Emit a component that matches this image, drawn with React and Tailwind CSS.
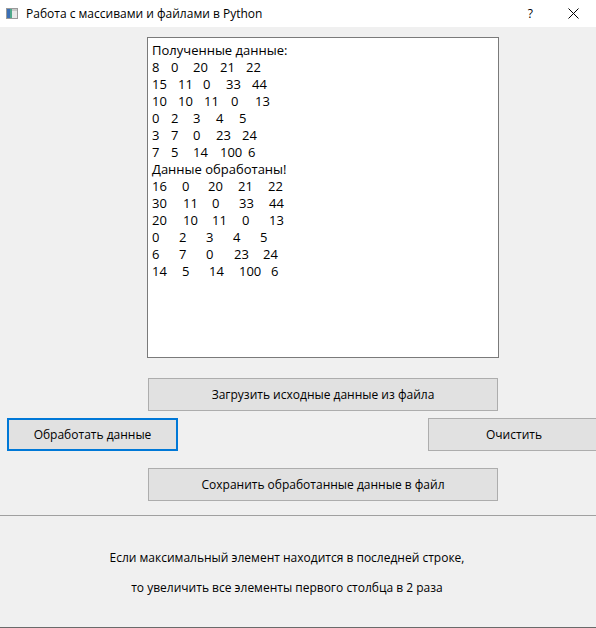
import React from "react";

const original = [
  [["8", "w-[19px]"], ["0", "w-[22px]"], ["20", "w-[27px]"], ["21", "w-[26px]"], ["22", ""]],
  [["15", "w-[26px]"], ["11", "w-[25px]"], ["0", "w-[23px]"], ["33", "w-[26px]"], ["44", ""]],
  [["10", "w-[26px]"], ["10", "w-[26px]"], ["11", "w-[27px]"], ["0", "w-[24px]"], ["13", ""]],
  [["0", "w-[19px]"], ["2", "w-[22px]"], ["3", "w-[23px]"], ["4", "w-[23px]"], ["5", ""]],
  [["3", "w-[19px]"], ["7", "w-[22px]"], ["0", "w-[23px]"], ["23", "w-[26px]"], ["24", ""]],
  [["7", "w-[19px]"], ["5", "w-[22px]"], ["14", "w-[27px]"], ["100", "w-[28px]"], ["6", ""]],
];

const processed = [
  [["16", "w-[30px]"], ["0", "w-[26px]"], ["20", "w-[30px]"], ["21", "w-[30px]"], ["22", ""]],
  [["30", "w-[31px]"], ["11", "w-[29px]"], ["0", "w-[27px]"], ["33", "w-[30px]"], ["44", ""]],
  [["20", "w-[31px]"], ["10", "w-[29px]"], ["11", "w-[30px]"], ["0", "w-[27px]"], ["13", ""]],
  [["0", "w-[27px]"], ["2", "w-[27px]"], ["3", "w-[27px]"], ["4", "w-[27px]"], ["5", ""]],
  [["6", "w-[27px]"], ["7", "w-[27px]"], ["0", "w-[28px]"], ["23", "w-[29px]"], ["24", ""]],
  [["14", "w-[30px]"], ["5", "w-[27px]"], ["14", "w-[30px]"], ["100", "w-[32px]"], ["6", ""]],
];

function Row({ cells }) {
  return (
    <div className="flex whitespace-nowrap">
      {cells.map(([t, w], i) => (
        <span key={i} className={`inline-block ${w}`}>
          {t}
        </span>
      ))}
    </div>
  );
}

function WinIcon() {
  return (
    <svg width="12" height="11" viewBox="0 0 12 11">
      <rect x="0.5" y="0.5" width="11" height="10" fill="#e8e8e8" stroke="#9a9a9a" />
      <rect x="1" y="1" width="3" height="9" fill="#3b6fb5" />
      <rect x="4" y="1" width="2" height="9" fill="#4fa88a" />
      <rect x="6" y="1" width="5" height="2" fill="#c8c8c8" />
    </svg>
  );
}

function Btn({ children, className }) {
  return (
    <div
      className={`h-[33px] bg-[#e1e1e1] border border-[#adadad] flex items-center justify-center text-[12px] text-black shrink-0 ${className}`}
    >
      {children}
    </div>
  );
}

export default function App() {
  return (
    <div className="w-[596px] h-[628px] bg-[#f0f0f0] flex flex-col overflow-hidden font-['Open_Sans',sans-serif] text-black">
      {/* Title bar */}
      <div className="h-[27px] bg-white flex items-center shrink-0">
        <div className="ml-[6px] flex items-center">
          <WinIcon />
        </div>
        <span className="ml-[8px] text-[12px] leading-none">Работа с массивами и файлами в Python</span>
        <span className="ml-auto text-[12px] leading-none mr-[35px]">?</span>
        <svg width="11" height="11" viewBox="0 0 11 11" className="mr-[17px]">
          <path d="M0.5 0.5 L10.5 10.5 M10.5 0.5 L0.5 10.5" stroke="#000" strokeWidth="1" fill="none" />
        </svg>
      </div>

      {/* Text box */}
      <div className="mt-[10px] ml-[147px] w-[352px] h-[321px] shrink-0 bg-white border border-[#7a7a7a] pl-[4px] pt-[4px] text-[13px] leading-[17px]">
        <div>Полученные данные:</div>
        {original.map((r, i) => (
          <Row key={i} cells={r} />
        ))}
        <div>Данные обработаны!</div>
        {processed.map((r, i) => (
          <Row key={i} cells={r} />
        ))}
      </div>

      <Btn className="mt-[20px] ml-[148px] w-[350px]">Загрузить исходные данные из файла</Btn>

      <div className="mt-[7px] flex shrink-0">
        <div className="ml-[7px] w-[171px] h-[33px] shrink-0 bg-[#e1e1e1] border-2 border-[#0078d7] flex items-center justify-center text-[12px]">
          Обработать данные
        </div>
        <Btn className="ml-[250px] w-[172px]">Очистить</Btn>
      </div>

      <Btn className="mt-[17px] ml-[148px] w-[350px]">Сохранить обработанные данные в файл</Btn>

      <div className="mt-[14px] h-px bg-[#a0a0a0] shrink-0" />

      <div className="mt-[27px] pr-[22px] text-center text-[12px] leading-[30px]">
        <div>Если максимальный элемент находится в последней строке,</div>
        <div>то увеличить все элементы первого столбца в 2 раза</div>
      </div>

      <div className="mt-auto h-px bg-[#6a6a6a] shrink-0" />
    </div>
  );
}
